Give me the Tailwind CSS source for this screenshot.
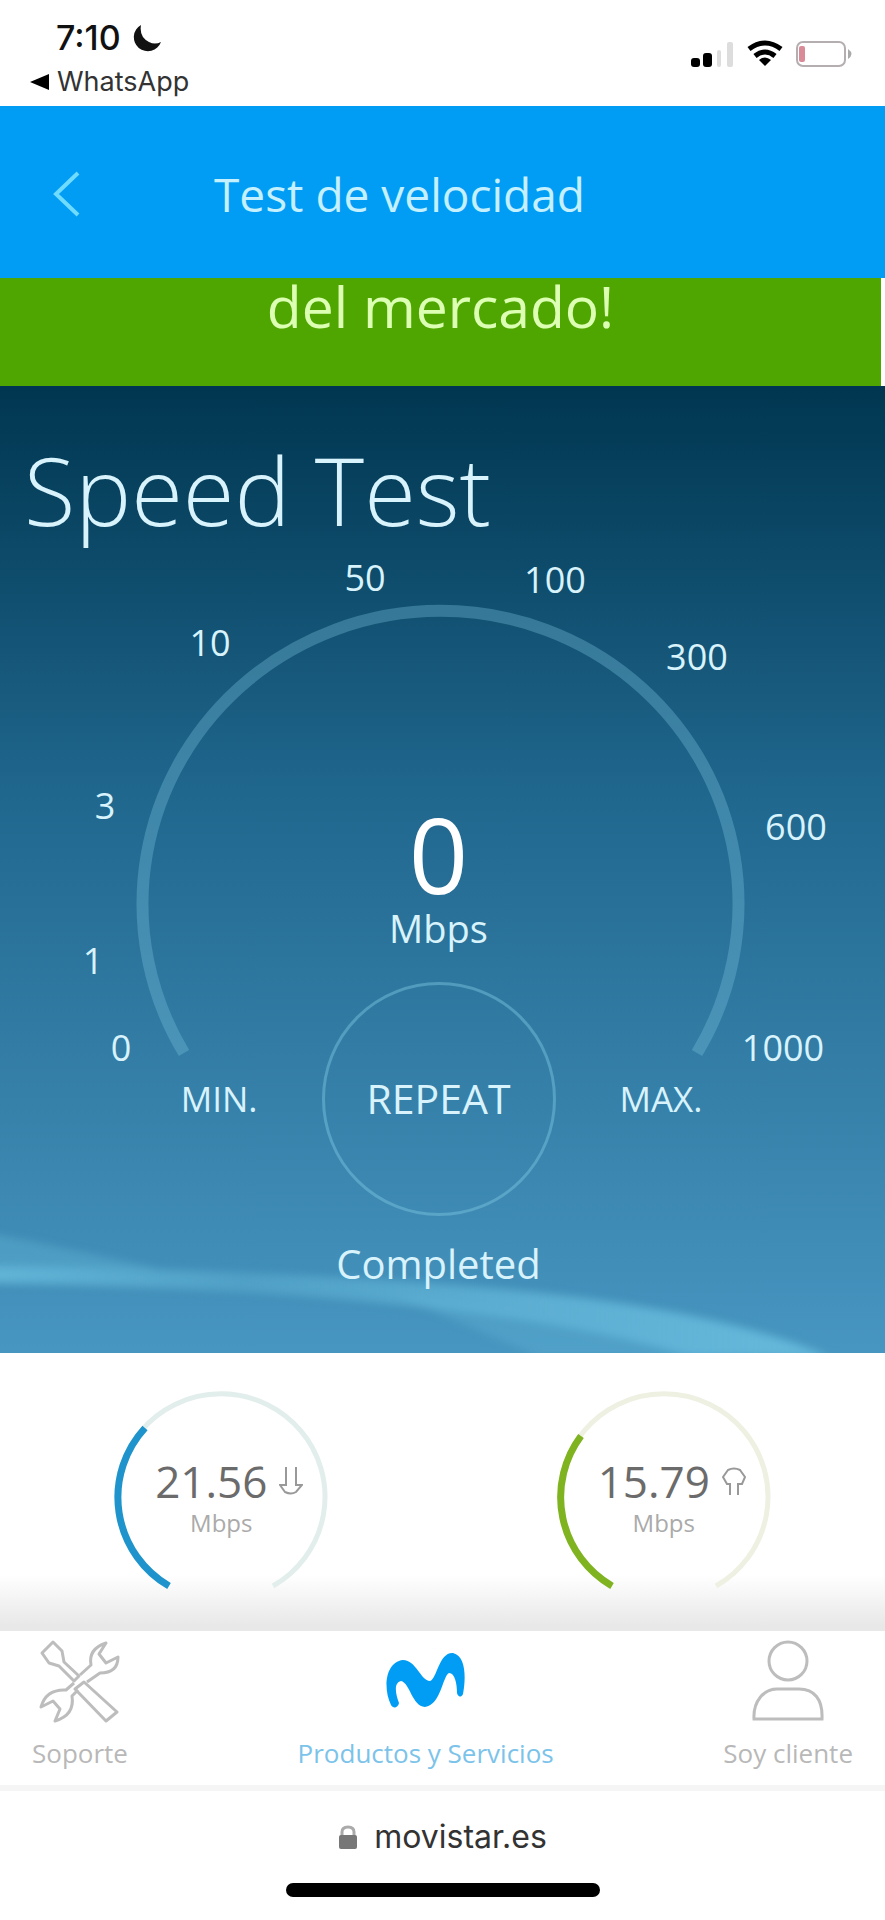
<!DOCTYPE html>
<html lang="es">
  <head>
    <meta charset="UTF-8" />
    <meta name="viewport" content="width=device-width, initial-scale=1.0" />
    <title>Test de velocidad</title>
    <script src="https://cdn.jsdelivr.net/npm/@tailwindcss/browser@4"></script>
  </head>
  <body class="flex min-h-screen flex-col bg-white font-['Open_Sans',sans-serif]">
    <!-- Status bar -->
    <div class="flex h-[106px] shrink-0 justify-between pt-5 pr-8 pl-[30px] font-['Inter',sans-serif]">
      <div>
        <div class="flex items-center gap-3 pl-[26px] text-[#111]">
          <span class="text-[34px] leading-9 font-medium">7:10</span>
          <svg class="size-7" viewBox="0 0 28 28" fill="currentColor">
            <path d="M8 1A14 14 0 1 0 28 18Q22 21 16 18Q6 13 8 1Z" />
          </svg>
        </div>
        <a href="#" class="mt-2 flex items-center gap-2 text-[27px] leading-9 text-[#333]">
          <svg class="h-4 w-[19px]" viewBox="0 0 19 16" fill="black"><path d="M0 8L19 0V16Z" /></svg>
          WhatsApp
        </a>
      </div>
      <div class="flex h-9 items-center gap-3 pt-8">
        <svg class="h-8 w-11" viewBox="0 0 44 32">
          <rect x="0" y="20" width="9" height="9" rx="3" fill="black" />
          <rect x="12" y="15" width="9" height="14" rx="3" fill="black" />
          <rect x="26" y="12" width="4" height="17" rx="2" fill="#ddd" />
          <rect x="36" y="4" width="6" height="25" rx="2" fill="#ddd" />
        </svg>
        <svg class="h-7 w-9" viewBox="0 0 36 28" fill="none" stroke="black" stroke-width="5">
          <path d="M2 9Q18 -3 34 9" />
          <path d="M8 16Q18 8 28 16" />
          <path d="M18 26L12 20Q18 15 24 20Z" fill="black" stroke="none" />
        </svg>
        <svg class="h-7 w-[58px]" viewBox="0 0 58 28" fill="none">
          <rect x="2" y="2" width="48" height="24" rx="6" stroke="#b5aeb0" stroke-width="2" />
          <path d="M53 9Q60 14 53 19Z" fill="#aaa" />
          <rect x="4" y="6" width="6" height="16" rx="2" fill="#d98c98" />
        </svg>
      </div>
    </div>

    <!-- Header -->
    <header class="flex h-[172px] shrink-0 items-center bg-[#019df4] pt-1 pl-[52px] text-[#c4f0ff]">
      <button type="button" aria-label="Volver" class="mr-[134px]">
        <svg class="h-[46px] w-7" viewBox="0 0 28 46" fill="none" stroke="#6fdcff" stroke-width="4">
          <path d="M26 2L4 23L26 44" />
        </svg>
      </button>
      <h1 class="text-[46px] leading-[64px]">Test de velocidad</h1>
    </header>

    <!-- Promo banner -->
    <div class="flex h-[108px] shrink-0 justify-center border-r-4 border-white bg-[#4fa600] text-[#dcffb4]">
      <p class="text-[57px] leading-[56px]">del mercado!</p>
    </div>

    <!-- Speed test -->
    <main class="relative flex h-[967px] shrink-0 flex-col overflow-hidden bg-linear-to-b from-[#013650] via-[#20678e] via-42% to-[#4796c1] text-[#d8f3fc]">
      <svg class="absolute inset-x-0 bottom-0 h-[120px] w-full overflow-visible blur-xs" viewBox="0 0 885 120" preserveAspectRatio="none">
        <defs>
          <linearGradient id="glow" x1="0" y1="0" x2="1" y2="0">
            <stop offset="0" stop-color="#66b9da" stop-opacity=".9" />
            <stop offset=".3" stop-color="#66b9da" stop-opacity=".4" />
            <stop offset=".6" stop-color="#66b9da" stop-opacity=".7" />
            <stop offset="1" stop-color="#66b9da" />
          </linearGradient>
        </defs>
        <path d="M-10 34Q280 36 500 56T830 124H690Q480 58 -10 50Z" fill="url(#glow)" />
        <path d="M-10 0Q60 14 160 36L-10 40Z" fill="#66b9da" opacity=".35" />
        <path d="M400 64Q500 72 690 124H540Z" fill="#66b9da" opacity=".3" />
      </svg>
      <h2 class="relative mt-10 pl-6 text-[94px] leading-[128px] font-light">Speed Test</h2>

      <!-- Dial -->
      <svg class="absolute inset-x-0 top-0 h-full w-full" viewBox="0 0 885 967" fill="#d8f3fc" font-size="36" text-anchor="middle">
        <path d="M184 667A298 293 0 1 1 697 667" fill="none" stroke="#76c0dc" stroke-opacity=".36" stroke-width="12" />
        <text x="121" y="675">0</text>
        <text x="93" y="588">1</text>
        <text x="105" y="433">3</text>
        <text x="210" y="270">10</text>
        <text x="365" y="205">50</text>
        <text x="555" y="207">100</text>
        <text x="697" y="284">300</text>
        <text x="796" y="454">600</text>
        <text x="783" y="675">1000</text>
      </svg>

      <div class="relative mt-[244px] flex flex-col items-center pr-2">
        <strong class="text-[104px] leading-[112px] font-normal text-white">0</strong>
        <span class="text-[38px] leading-9">Mbps</span>
      </div>
      <div class="relative mt-9 grid grid-cols-[1fr_234px_1fr] items-center pr-2 text-[35px]">
        <span class="pr-16 text-right">MIN.</span>
        <button type="button" class="h-[234px] rounded-full border-3 border-[#76c0dc]/50 text-[41px] font-medium">REPEAT</button>
        <span class="pl-16">MAX.</span>
      </div>
      <p class="relative mt-5 pr-2 text-center text-[40px] leading-[56px]">Completed</p>
    </main>

    <!-- Results -->
    <section class="grid h-[278px] shrink-0 grid-cols-2 bg-linear-to-b from-white from-80% to-[#e8e8e8] to-98% pt-10">
      <div class="relative">
        <svg class="mx-auto h-[208px] w-[216px] overflow-visible" viewBox="0 0 216 208" fill="none" stroke-width="5">
          <path d="M56 193A104 103 0 1 1 160 193" stroke="#e2eeec" />
          <path d="M56 193A104 103 0 0 1 32 35" stroke="#1f94cc" stroke-width="7" />
        </svg>
        <div class="absolute inset-0 flex flex-col items-center pt-[62px]">
          <div class="flex items-center gap-3 pl-4 text-[44px] leading-[52px] text-[#6b6b6b]">
            21.56
            <svg class="h-7 w-6" viewBox="0 0 24 28" fill="none" stroke="#999" stroke-width="2">
              <path d="M7 0V18H1L6 25Q12 28 17 25L23 18H17V0" />
            </svg>
          </div>
          <span class="text-2xl leading-8 text-[#aaa]">Mbps</span>
        </div>
      </div>
      <div class="relative">
        <svg class="mx-auto h-[208px] w-[216px] overflow-visible" viewBox="0 0 216 208" fill="none" stroke-width="5">
          <path d="M56 193A104 103 0 1 1 160 193" stroke="#eef0e2" />
          <path d="M56 193A104 103 0 0 1 25 43" stroke="#7fb320" stroke-width="7" />
        </svg>
        <div class="absolute inset-0 flex flex-col items-center pt-[62px]">
          <div class="flex items-center gap-3 pl-4 text-[44px] leading-[52px] text-[#6b6b6b]">
            15.79
            <svg class="h-7 w-6" viewBox="0 0 24 28" fill="none" stroke="#999" stroke-width="2">
              <path d="M8 28V17H5L1 10L6 3Q12 0 18 3L23 10L20 17H16V28" />
            </svg>
          </div>
          <span class="text-2xl leading-8 text-[#aaa]">Mbps</span>
        </div>
      </div>
    </section>

    <!-- Tab bar -->
    <nav class="flex h-[160px] shrink-0 justify-between border-b-6 border-[#f5f5f5] px-8 text-[26px] leading-9 text-[#b8b8b8]">
      <a href="#" class="flex flex-col items-center gap-3 pt-2">
        <svg class="size-[84px]" viewBox="0 0 84 84" fill="none" stroke="#bdbdbd" stroke-width="3" stroke-linejoin="round">
          <path d="M4 14L15 3L24 12L26 23L41 37L36 42L21 27L11 24Z" />
          <path d="M46 43L79 73L68 82L37 50Z" />
          <path d="M42 36L53 26Q50 10 68 4L61 15L68 24L80 18Q80 34 62 34L49 43" />
          <path d="M36 44L28 51Q8 50 3 68L15 62L22 70L17 82Q37 76 34 57L40 51" />
        </svg>
        Soporte
      </a>
      <a href="#" class="flex flex-col items-center gap-3 pt-2 text-[#7cc3ea]">
        <svg class="size-[84px]" viewBox="0 0 84 84" fill="#019df4">
          <path d="M7 66C-1 50 1 23 19 21C32 21 37 42 46 42C53 40 55 13 69 14C82 17 82 39 79 55C77 59 74 58 73 54C73 45 71 34 65 34C59 36 57 66 41 68C28 67 26 44 17 42C9 44 12 56 15 64C14 69 9 70 7 66Z" />
        </svg>
        Productos y Servicios
      </a>
      <a href="#" class="flex flex-col items-center gap-3 pt-2">
        <svg class="size-[84px]" viewBox="0 0 84 84" fill="none" stroke="#bdbdbd" stroke-width="3">
          <circle cx="42" cy="22" r="19" />
          <path d="M8 80C7 62 18 50 31 50H53C68 50 77 60 76 80Z" />
        </svg>
        Soy cliente
      </a>
    </nav>

    <!-- Browser bar -->
    <footer class="flex grow flex-col items-center pt-6 font-['Inter',sans-serif]">
      <div class="flex items-center gap-4 text-[32px] leading-[44px] text-[#333]">
        <svg class="h-6 w-5" viewBox="0 0 20 24">
          <path d="M4 12V7Q4 2 10 2T16 7V12" fill="none" stroke="#aaa" stroke-width="3" />
          <rect x="1" y="10" width="18" height="14" rx="2" fill="#777" />
        </svg>
        movistar.es
      </div>
      <div class="mt-6 h-[14px] w-[314px] rounded-full bg-black"></div>
    </footer>
  </body>
</html>
